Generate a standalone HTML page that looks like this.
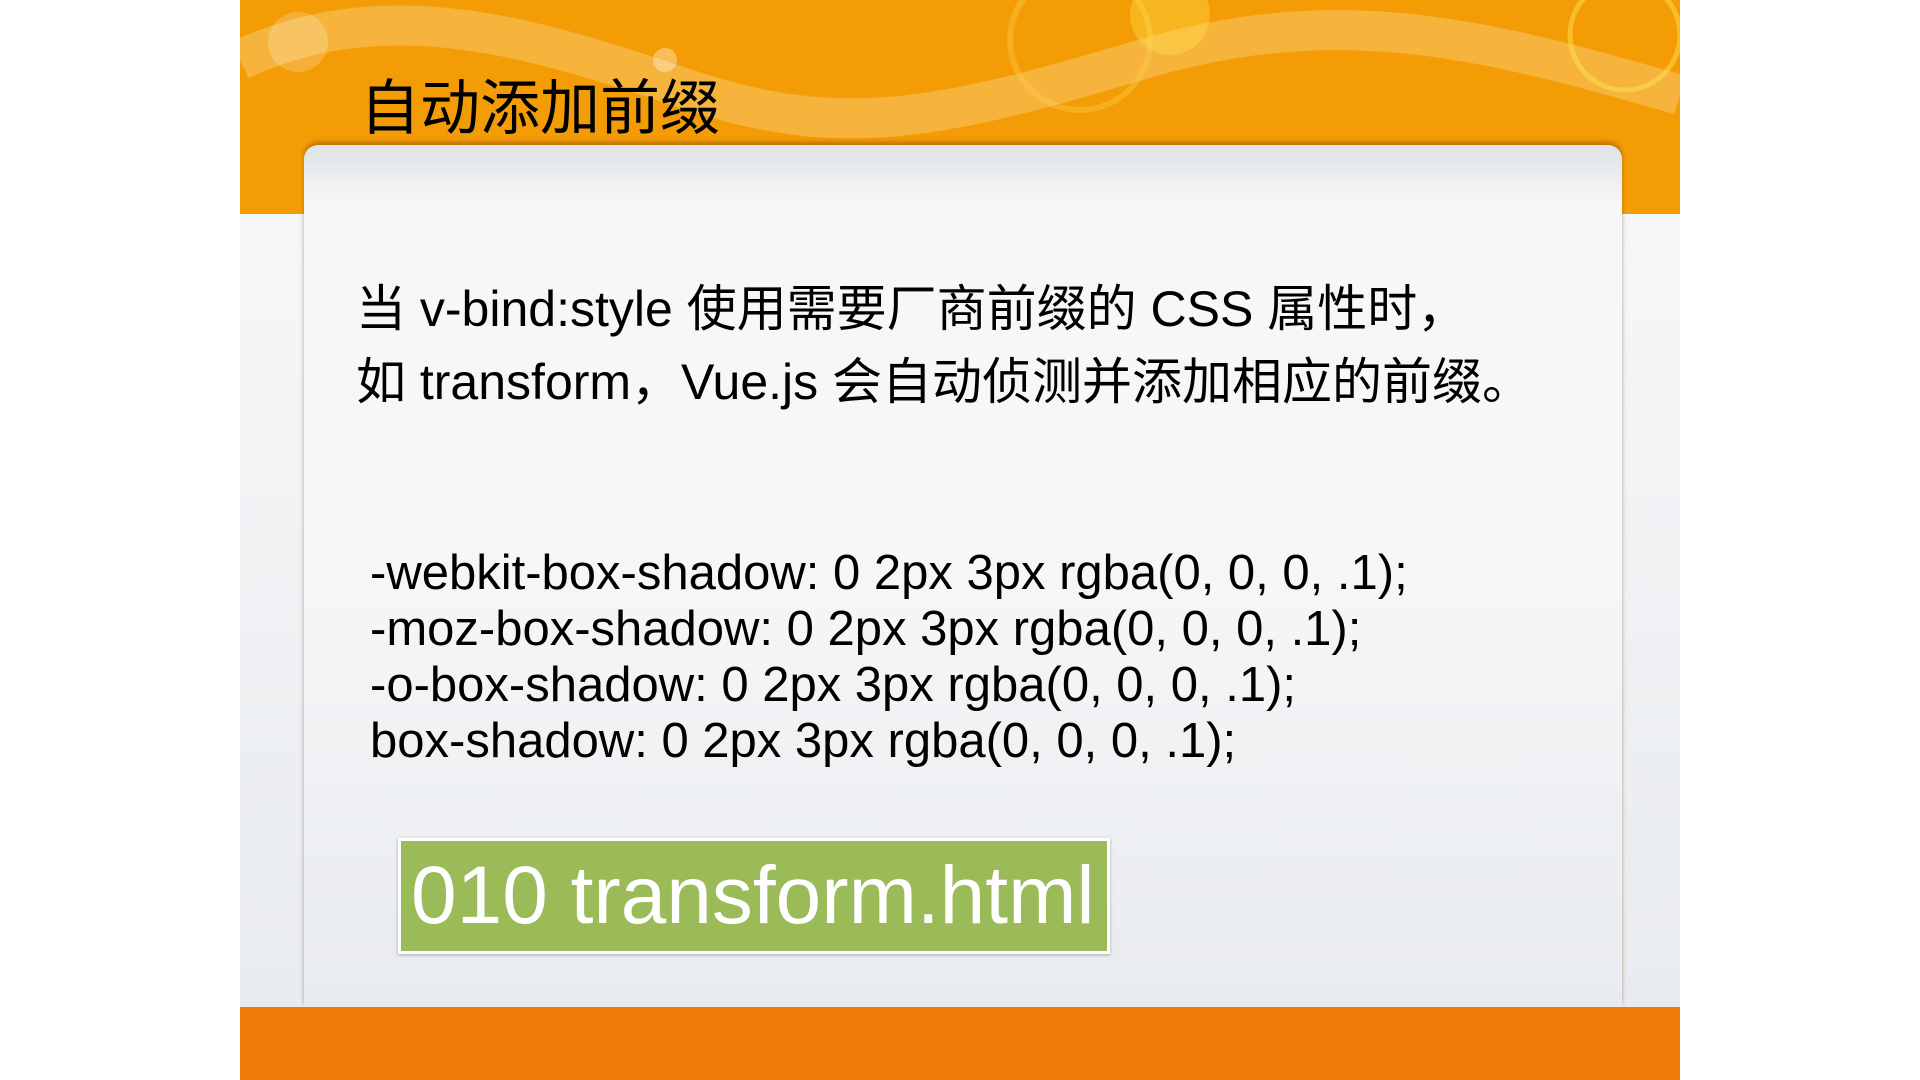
<!DOCTYPE html>
<html><head><meta charset="utf-8"><style>
html,body{margin:0;padding:0;background:#fff;}
body{width:1920px;height:1080px;position:relative;overflow:hidden;font-family:"Liberation Sans","Noto Sans CJK SC",sans-serif;}
.slide{position:absolute;left:240px;top:0;width:1440px;height:1080px;background:linear-gradient(#f5f7f8,#e6eaee);}
.top{position:absolute;left:0;top:0;width:1440px;height:214px;background:#f39c06;}
.panel{position:absolute;left:64px;top:145px;width:1318px;height:862px;background:linear-gradient(#dfe3e6 0px,#f6f7f8 60px,#f6f7f8 400px,#e8ebef 862px);border-radius:14px 14px 0 0;box-shadow:0 -3px 4px rgba(120,60,0,.45);}
.lower{position:absolute;left:0;top:214px;width:1440px;height:793px;background:linear-gradient(#f6f7f8,#e8ebef);}
.bottom{position:absolute;left:0;top:1007px;width:1440px;height:73px;background:#ee7b08;}
.wave{position:absolute;left:0;top:0;}
.t{position:absolute;white-space:nowrap;color:#000;}
.box{position:absolute;left:158px;top:838px;width:696px;height:110px;background:#9bbb59;border:3px solid #fff;box-shadow:0 1px 3px rgba(0,0,0,.3);color:#fff;font-size:82px;line-height:110px;padding-left:10px;box-sizing:content-box;}
</style></head><body>
<div class="slide">
<div class="top"></div>
<svg class="wave" width="1440" height="214">
<path d="M0 60 C150 -10 300 40 450 90 S700 120 900 60 S1250 40 1440 95" stroke="rgba(255,235,190,.3)" stroke-width="40" fill="none"/>
<circle cx="840" cy="40" r="70" fill="none" stroke="rgba(255,220,90,.3)" stroke-width="6"/>
<circle cx="930" cy="15" r="40" fill="rgba(255,230,80,.35)"/>
<circle cx="1385" cy="35" r="55" fill="none" stroke="rgba(255,230,80,.45)" stroke-width="5"/>
<circle cx="58" cy="42" r="30" fill="rgba(255,255,255,.2)"/>
<circle cx="425" cy="60" r="12" fill="rgba(255,255,255,.35)"/>
</svg>
<div class="lower"></div>
<div class="panel"></div>
<div class="bottom"></div>
<div class="t" style="left:120px;top:60px;font-size:60px;">自动添加前缀</div>
<div class="t" style="left:116px;top:269px;font-size:50px;">当 v-bind:style 使用需要厂商前缀的 CSS 属性时，</div>
<div class="t" style="left:116px;top:342px;font-size:50px;">如 transform，Vue.js 会自动侦测并添加相应的前缀。</div>
<div class="t" style="left:130px;top:545px;font-size:49px;line-height:56px;">-webkit-box-shadow: 0 2px 3px rgba(0, 0, 0, .1);<br>-moz-box-shadow: 0 2px 3px rgba(0, 0, 0, .1);<br>-o-box-shadow: 0 2px 3px rgba(0, 0, 0, .1);<br>box-shadow: 0 2px 3px rgba(0, 0, 0, .1);</div>
<div class="box">010 transform.html</div>
</div>
</body></html>
